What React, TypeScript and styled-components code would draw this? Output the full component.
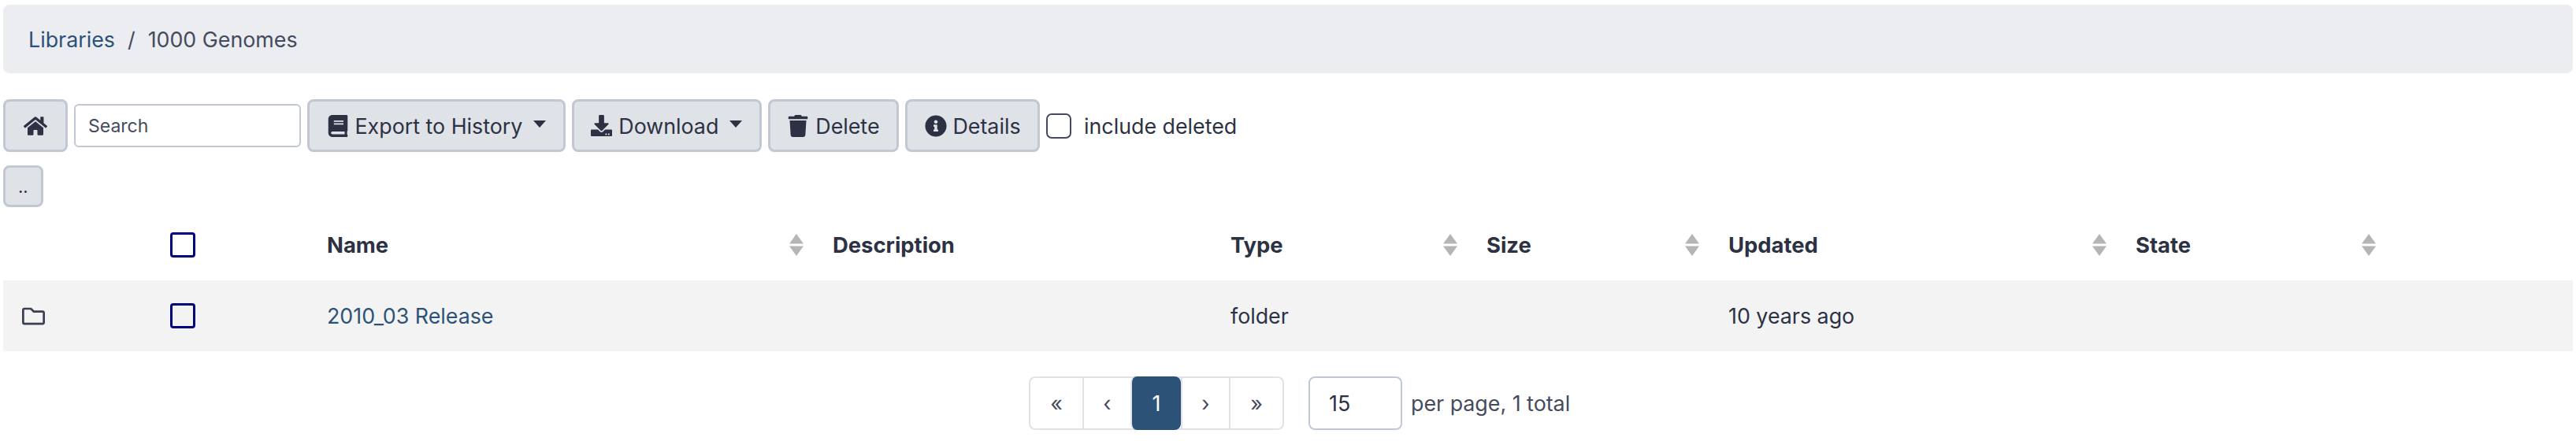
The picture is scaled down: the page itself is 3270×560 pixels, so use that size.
import React from "react";
import styled, { createGlobalStyle } from "styled-components";
import {
  FaBook,
  FaDownload,
  FaHome,
  FaInfoCircle,
  FaRegFolder,
  FaTrash,
} from "react-icons/fa";

const GlobalStyle = createGlobalStyle`
  html, body {
    margin: 0;
    background: #fff;
    color: #2c3143;
    font-family: Inter, "Liberation Sans", sans-serif;
    font-size: 26.8px;
  }
`;

const Page = styled.div`
  box-sizing: border-box;
  width: 3270px;
  height: 560px;
  padding: 6px 4px 0;
  overflow: hidden;
`;

/* ---------- Breadcrumb ---------- */

const Breadcrumb = styled.nav`
  box-sizing: border-box;
  height: 87px;
  padding-left: 32px;
  display: flex;
  align-items: center;
  background: #ebedf1;
  border-radius: 8px;
`;

const Link = styled.a`
  color: #2c5278;
  text-decoration: none;
`;

const Slash = styled.span`
  margin: 0 16px;
  color: #454b5e;
`;

const Current = styled.span`
  color: #454b5e;
`;

/* ---------- Toolbar ---------- */

const Toolbar = styled.div`
  display: flex;
  align-items: center;
  gap: 8px;
  margin-top: 33px;
`;

const Button = styled.button<{ $small?: boolean }>`
  box-sizing: border-box;
  height: ${({ $small }) => ($small ? "53px" : "67px")};
  padding: 0 ${({ $small }) => ($small ? "16px" : "21.5px")};
  display: flex;
  align-items: center;
  gap: 8px;
  background: #dfe2e7;
  border: 3px solid #c2c8d3;
  border-radius: 8px;
  color: #2c3143;
  font-family: inherit;
  font-size: ${({ $small }) => ($small ? "22px" : "26.8px")};
`;

const HomeButton = styled(Button)`
  padding: 0 23px;
`;

const Caret = styled.span`
  width: 0;
  height: 0;
  margin-left: 6px;
  margin-bottom: 5px;
  border-left: 8px solid transparent;
  border-right: 8px solid transparent;
  border-top: 9px solid #2c3143;
`;

const SearchInput = styled.input`
  box-sizing: border-box;
  width: 288px;
  height: 55px;
  padding: 0 16px;
  background: #fff;
  border: 2px solid #c2c8d3;
  border-radius: 6px;
  color: #2c3143;
  font-family: inherit;
  font-size: 23px;

  &::placeholder {
    color: #454b5e;
    opacity: 1;
  }
`;

const CheckLabel = styled.label`
  display: flex;
  align-items: center;
  gap: 16px;
  color: #2c3143;
`;

const RoundCheck = styled.input`
  appearance: none;
  box-sizing: border-box;
  width: 32px;
  height: 32px;
  margin: 0;
  background: #fff;
  border: 2px solid #454b5e;
  border-radius: 7px;
`;

const UpRow = styled.div`
  margin-top: 17px;
`;

/* ---------- Table ---------- */

const Table = styled.table`
  width: 100%;
  margin-top: 3px;
  table-layout: fixed;
  border-collapse: collapse;
`;

const HeadCell = styled.th`
  box-sizing: border-box;
  height: 90px;
  padding: 0 0 0 24px;
  text-align: left;
  font-weight: 700;
  font-size: 27.4px;
`;

const HeadInner = styled.div`
  display: flex;
  align-items: center;
  justify-content: space-between;
  padding-right: 13px;
`;

const Row = styled.tr`
  background: #f3f3f3;
`;

const Cell = styled.td`
  box-sizing: border-box;
  height: 90px;
  padding: 0 0 0 24px;
  vertical-align: middle;
`;

const SquareCheck = styled.input`
  appearance: none;
  display: block;
  box-sizing: border-box;
  width: 32px;
  height: 32px;
  margin: 0;
  background: transparent;
  border: 3px solid #00007f;
  border-radius: 4px;
`;

const FolderIcon = styled(FaRegFolder)`
  display: block;
  width: 29px;
  height: 29px;
  color: #3a3f51;
`;

const SortIcon = () => (
  <svg width="18" height="28" viewBox="0 0 18 28" aria-hidden="true">
    <path d="M9 0 L18 12.5 H0 Z" fill="#b5b5b5" />
    <path d="M9 28 L18 15.5 H0 Z" fill="#b5b5b5" />
  </svg>
);

/* ---------- Pagination ---------- */

const Footer = styled.div`
  display: flex;
  align-items: center;
  margin-top: 32px;
  margin-left: 1302px;
`;

const Pages = styled.div`
  box-sizing: border-box;
  height: 68px;
  display: flex;
  background: #fff;
  border: 2px solid #dfe2e7;
  border-radius: 8px;
`;

const PageItem = styled.span<{ $active?: boolean; $w: number }>`
  box-sizing: border-box;
  width: ${({ $w }) => $w}px;
  margin: ${({ $active }) => ($active ? "-2px 0" : "0")};
  display: flex;
  align-items: center;
  justify-content: center;
  background: ${({ $active }) => ($active ? "#2c5278" : "transparent")};
  border-radius: ${({ $active }) => ($active ? "8px" : "0")};
  color: ${({ $active }) => ($active ? "#fff" : "#454b5e")};

  & + & {
    border-left: ${({ $active }) => ($active ? "0" : "2px solid #dfe2e7")};
  }
`;

const PerPage = styled.input`
  box-sizing: border-box;
  width: 119px;
  height: 68px;
  margin-left: 31px;
  padding: 0 24px;
  border: 2px solid #c2c8d3;
  border-radius: 8px;
  color: #2c3143;
  font-family: inherit;
  font-size: 26.8px;
`;

const PerPageText = styled.span`
  margin-left: 11px;
  color: #454b5e;
`;

const columns = [188, 199, 642, 505, 325, 307, 517, 342];

export default function App() {
  return (
    <Page>
      <GlobalStyle />
      <Breadcrumb>
        <Link href="#">Libraries</Link>
        <Slash>/</Slash>
        <Current>1000 Genomes</Current>
      </Breadcrumb>

      <Toolbar>
        <HomeButton aria-label="Home">
          <FaHome size={30} />
        </HomeButton>
        <SearchInput placeholder="Search" />
        <Button>
          <FaBook size={28} />
          Export to History
          <Caret />
        </Button>
        <Button>
          <FaDownload size={27} />
          Download
          <Caret />
        </Button>
        <Button>
          <FaTrash size={28} />
          Delete
        </Button>
        <Button>
          <FaInfoCircle size={28} />
          Details
        </Button>
        <CheckLabel>
          <RoundCheck type="checkbox" />
          include deleted
        </CheckLabel>
      </Toolbar>

      <UpRow>
        <Button $small>..</Button>
      </UpRow>

      <Table>
        <colgroup>
          {columns.map((width, i) => (
            <col key={i} style={{ width }} />
          ))}
          <col />
        </colgroup>
        <thead>
          <tr>
            <HeadCell />
            <HeadCell>
              <SquareCheck type="checkbox" />
            </HeadCell>
            <HeadCell>
              <HeadInner>
                Name
                <SortIcon />
              </HeadInner>
            </HeadCell>
            <HeadCell>Description</HeadCell>
            <HeadCell>
              <HeadInner>
                Type
                <SortIcon />
              </HeadInner>
            </HeadCell>
            <HeadCell>
              <HeadInner>
                Size
                <SortIcon />
              </HeadInner>
            </HeadCell>
            <HeadCell>
              <HeadInner>
                Updated
                <SortIcon />
              </HeadInner>
            </HeadCell>
            <HeadCell>
              <HeadInner>
                State
                <SortIcon />
              </HeadInner>
            </HeadCell>
            <HeadCell />
          </tr>
        </thead>
        <tbody>
          <Row>
            <Cell>
              <FolderIcon />
            </Cell>
            <Cell>
              <SquareCheck type="checkbox" />
            </Cell>
            <Cell>
              <Link href="#">2010_03 Release</Link>
            </Cell>
            <Cell />
            <Cell>folder</Cell>
            <Cell />
            <Cell>10 years ago</Cell>
            <Cell />
            <Cell />
          </Row>
        </tbody>
      </Table>

      <Footer>
        <Pages>
          <PageItem $w={66}>«</PageItem>
          <PageItem $w={61}>‹</PageItem>
          <PageItem $w={64} $active>
            1
          </PageItem>
          <PageItem $w={61}>›</PageItem>
          <PageItem $w={68}>»</PageItem>
        </Pages>
        <PerPage defaultValue="15" />
        <PerPageText>per page, 1 total</PerPageText>
      </Footer>
    </Page>
  );
}
